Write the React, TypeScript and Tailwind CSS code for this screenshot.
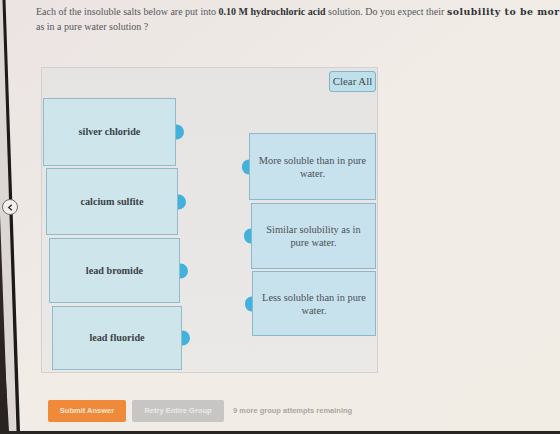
import React from "react";

const serif = { fontFamily: '"Liberation Serif", "Times New Roman", serif' };
const wideSerif = { fontFamily: '"DejaVu Serif", "Liberation Serif", serif' };
const sans = { fontFamily: '"Liberation Sans", Arial, sans-serif' };

function Bezel() {
  return (
    <div className="relative w-[20px] shrink-0">
      <svg width="20" height="431" viewBox="0 0 20 431" className="block">
        <polygon points="0,0 3,0 16,431 0,431" fill="#dcd7d4" />
        <polygon points="0,215 0,431 8,431" fill="#2e2624" />
        <polygon points="0,330 0,431 9,431 3,330" fill="#2b2321" />
        <polygon points="2.5,0 5.5,0 20,431 16.5,431" fill="#1d1a1a" />
      </svg>
      <div className="absolute left-[2px] top-[199px] w-[16px] h-[16px] rounded-full bg-[#f3f1ef] border-[1.5px] border-[#6f6b69] flex items-center justify-center">
        <svg width="7" height="7" viewBox="0 0 7 7">
          <path d="M4.8 0.8 L1.8 3.5 L4.8 6.2" fill="none" stroke="#3a3636" strokeWidth="1.5" />
        </svg>
      </div>
    </div>
  );
}

type SaltProps = { label: string; h: string; ml: string; mt: string; w: string };

function SaltCard({ label, h, ml, mt, w }: SaltProps) {
  return (
    <div
      className={`relative flex items-center justify-center border border-[#92bac8] bg-[#cde5eb] ${h} ${ml} ${mt} ${w}`}
    >
      <span className="text-[10.2px] font-bold text-[#3b4246]" style={serif}>
        {label}
      </span>
      <span className="absolute right-[-9px] top-1/2 -translate-y-1/2 w-[8px] h-[15px] rounded-r-full bg-[#40b2db]" />
    </div>
  );
}

type TargetProps = { lines: [string, string]; h: string; w: string; mt: string };

function TargetCard({ lines, h, w, mt }: TargetProps) {
  return (
    <div
      className={`relative flex items-center justify-center border border-[#8cb8cb] bg-[#c8e2ed] ${h} ${w} ${mt}`}
    >
      <p className="text-center text-[10.4px] leading-[13px] text-[#4b5156]" style={serif}>
        {lines[0]}
        <br />
        {lines[1]}
      </p>
      <span className="absolute left-[-8px] top-1/2 -translate-y-1/2 w-[7px] h-[15px] rounded-l-full bg-[#40b2db]" />
    </div>
  );
}

export default function App() {
  return (
    <div className="w-[560px] h-[434px] overflow-hidden flex flex-col bg-linear-to-br from-[#ebe4e3] via-[#f1ece6] to-[#f1ede5]">
      <div className="flex flex-1 min-h-0">
        <Bezel />
        <div className="flex-1 min-w-0 flex flex-col">
          <div className="pt-[4px] pl-[16px] text-[10px] leading-[15px] text-[#55585b]" style={serif}>
            <p className="whitespace-nowrap">
              Each of the insoluble salts below are put into{" "}
              <b className="text-[#2f3336]">0.10 M hydrochloric acid</b> solution. Do you expect their{" "}
              <b className="text-[9.4px] tracking-[0.5px] text-[#2f3336]" style={wideSerif}>
                solubility to be more
              </b>
            </p>
            <p>as in a pure water solution ?</p>
          </div>

          <div className="ml-[21px] mt-[33px] w-[337px] h-[306px] border border-[#d3d1cf] bg-linear-to-b from-[#e5e4e2] to-[#ebe9e7] flex flex-col">
            <div className="flex justify-end pt-[3px] pr-[1px]">
              <button
                className="w-[47px] h-[21px] rounded-[3px] border border-[#7fb3c5] bg-[#bfe0ea] text-[10.8px] text-[#3f4a50]"
                style={serif}
              >
                Clear All
              </button>
            </div>
            <div className="flex justify-between pl-[1px] pr-[1px]">
              <div className="flex flex-col mt-[6px]">
                <SaltCard label="silver chloride" h="h-[68px]" ml="ml-0" mt="mt-0" w="w-[133px]" />
                <SaltCard label="calcium sulfite" h="h-[67px]" ml="ml-[3px]" mt="mt-[2px]" w="w-[132px]" />
                <SaltCard label="lead bromide" h="h-[65px]" ml="ml-[6px]" mt="mt-[3px]" w="w-[131px]" />
                <SaltCard label="lead fluoride" h="h-[64px]" ml="ml-[9px]" mt="mt-[3px]" w="w-[130px]" />
              </div>
              <div className="flex flex-col items-end mt-[41px]">
                <TargetCard lines={["More soluble than in pure", "water."]} h="h-[67px]" w="w-[127px]" mt="mt-0" />
                <TargetCard lines={["Similar solubility as in", "pure water."]} h="h-[66px]" w="w-[125px]" mt="mt-[3px]" />
                <TargetCard lines={["Less soluble than in pure", "water."]} h="h-[65px]" w="w-[124px]" mt="mt-[2px]" />
              </div>
            </div>
          </div>

          <div className="flex items-center ml-[28px] mt-[27px] text-[7.5px] font-bold" style={sans}>
            <button className="w-[78px] h-[22px] rounded-[2px] bg-[#ef8a3b] text-[#fde6d2]">Submit Answer</button>
            <button className="ml-[6px] w-[92px] h-[22px] rounded-[2px] bg-[#c8c6c4] text-[#ebe9e7]">
              Retry Entire Group
            </button>
            <span className="ml-[9px] text-[#a9a7a5]">9 more group attempts remaining</span>
          </div>
        </div>
      </div>
      <div className="h-[3px] bg-[#2a2624]" />
    </div>
  );
}
